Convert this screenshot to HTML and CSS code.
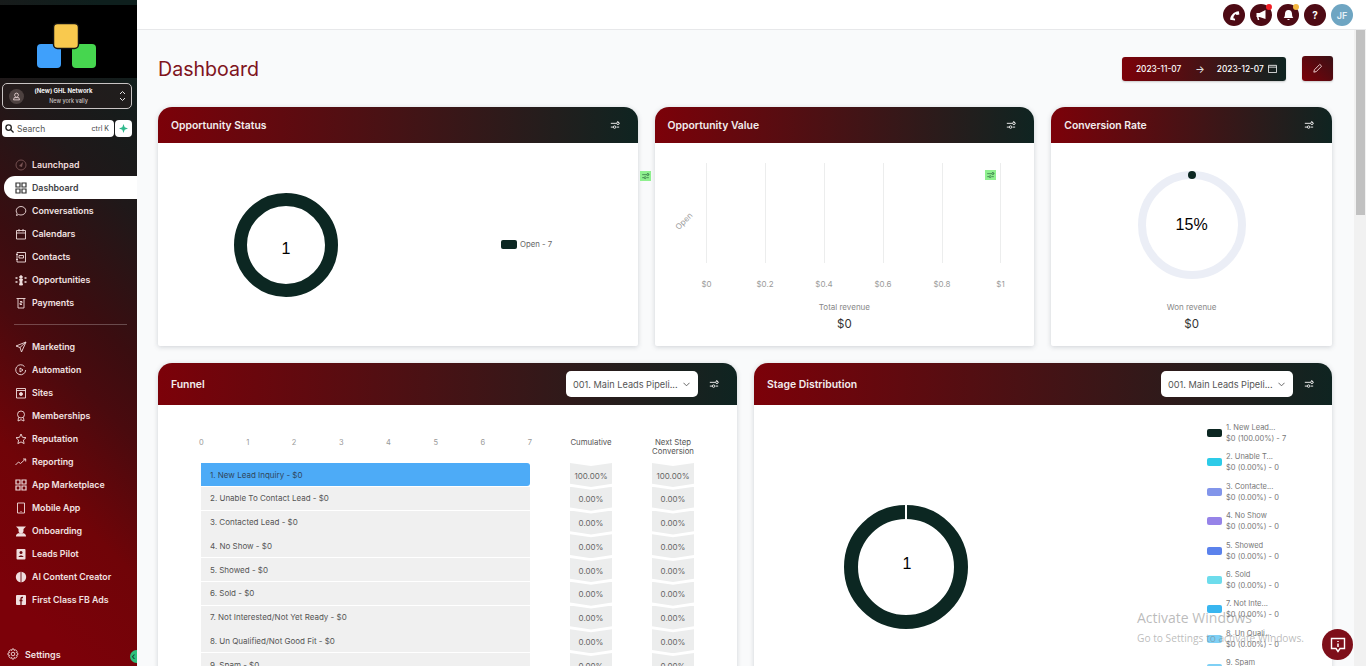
FILE: index.html
```html
<!DOCTYPE html>
<html lang="en">
<head>
<meta charset="utf-8">
<title>Dashboard</title>
<link rel="stylesheet" href="styles.css">
</head>
<body>
<svg class="defs" width="0" height="0" aria-hidden="true">
  <symbol id="sliders" viewBox="0 0 12 12"><path d="M1 4h7M1 8.500h3M8 8.500h3M9 1.500l2 2.500M4 8.500a1.500 1.500 0 1 0 3 0a1.500 1.500 0 1 0-3 0M8 4a1.500 1.500 0 1 0 3 0a1.500 1.500 0 1 0-3 0" fill="none" stroke="currentColor" stroke-width="1.200"/></symbol>
  <symbol id="grid" viewBox="0 0 12 12"><path d="M1 1h4v4H1zM7 1h4v4H7zM1 7h4v4H1zM7 7h4v4H7z" fill="none" stroke="currentColor" stroke-width="1.200"/></symbol>
</svg>
<div class="app">
  <aside class="sidebar">
    <div class="logo">
      <svg width="137" height="73" viewBox="0 0 137 73">
        <rect x="37" y="39" width="24" height="24" rx="4" fill="#3fa0fb"/>
        <rect x="72" y="39" width="24" height="24" rx="4" fill="#46d64f"/>
        <rect x="53.500" y="18.500" width="25" height="25" rx="4" fill="#f9c94e" stroke="#111" stroke-width="1.500"/>
      </svg>
    </div>
    <div class="account">
      <span class="account-avatar"><svg width="9" height="9" viewBox="0 0 12 12"><path d="M6 1.500a2.500 2.500 0 0 1 2.500 2.500c0 1.500-1.500 3-2.500 3S3.500 5.500 3.500 4A2.500 2.500 0 0 1 6 1.500zM2 10.500h8l-1-3H3z" fill="none" stroke="#f0dcdc" stroke-width="1.100"/></svg></span>
      <span class="account-text"><b>(New) GHL Network</b><small>New york vally</small></span>
      <svg class="account-caret" width="7" height="14" viewBox="0 0 7 14"><path d="M1 5l2.500-2.500L6 5M1 9l2.500 2.500L6 9" fill="none" stroke="#e4e4e4" stroke-width="1"/></svg>
    </div>
    <div class="search-row">
      <div class="search">
        <svg width="9" height="9" viewBox="0 0 10 10"><path d="M6.500 6.500L9.500 9.500M7 4a3 3 0 1 1-6 0a3 3 0 1 1 6 0z" fill="none" stroke="#222" stroke-width="1.500"/></svg>
        <span class="search-label">Search</span><span class="search-key">ctrl K</span>
      </div>
      <div class="spark"><svg width="9" height="9" viewBox="0 0 10 10"><path d="M5 0l1.300 3.700L10 5 6.300 6.300 5 10 3.700 6.300 0 5l3.700-1.300z" fill="#2fb98c"/></svg></div>
    </div>
    <nav class="nav">
      <a class="nav-item muted"><svg viewBox="0 0 12 12"><circle cx="6" cy="6" r="5" fill="none" stroke="#7a5555"/><path d="M4 7l4-4-1 5z" fill="#7a5555" stroke="none"/></svg>Launchpad</a>
      <a class="nav-item active"><svg viewBox="0 0 12 12"><use href="#grid"/></svg>Dashboard</a>
      <a class="nav-item"><svg viewBox="0 0 12 12"><path d="M6 1.500c2.800 0 4.800 2 4.800 4.300S8.800 10 6 10c-.8 0-1.600-.2-2.300-.5L1.500 10.500l.6-2.300C1.500 7.500 1.200 6.700 1.200 5.800 1.200 3.500 3.200 1.500 6 1.500z"/></svg>Conversations</a>
      <a class="nav-item"><svg viewBox="0 0 12 12"><path d="M1.500 2.500h9v8.500h-9zM1.500 5h9M4 1v2.500M8 1v2.500"/></svg>Calendars</a>
      <a class="nav-item"><svg viewBox="0 0 12 12"><path d="M2 1.500h8.500v9.500H2zM4 4.500h4.500v2.500H4zM1 3.500h2M1 8.500h2"/></svg>Contacts</a>
      <a class="nav-item"><svg viewBox="0 0 12 12"><circle cx="6" cy="3" r="1.300" fill="#f0dede"/><path d="M4.500 5h3l-.7 3 .7 3h-3l.7-3z" fill="#f0dede"/><path d="M.5 4h2M.5 8h2M9.500 4h2M9.500 8h2" stroke-width="1.500"/></svg>Opportunities</a>
      <a class="nav-item"><svg viewBox="0 0 12 12"><path d="M1.500 1.500h9M3 1.500v9.500h6V1.500M5 4.500h2v1.500H5v1.500h2"/></svg>Payments</a>
      <div class="nav-divider"></div>
      <a class="nav-item"><svg viewBox="0 0 12 12"><path d="M11 1L1 5l4 1.500L6.500 11zM11 1L5 6.500"/></svg>Marketing</a>
      <a class="nav-item"><svg viewBox="0 0 12 12"><path d="M9.500 2.500a5 5 0 1 0 1.200 3.500M5 4l3 2-3 2z"/></svg>Automation</a>
      <a class="nav-item"><svg viewBox="0 0 12 12"><path d="M1.500 1.500h9v9.500h-9zM1.500 3.500h9"/><circle cx="6" cy="7" r="1.500" fill="#f0dede"/></svg>Sites</a>
      <a class="nav-item"><svg viewBox="0 0 12 12"><circle cx="6" cy="4.500" r="3.500"/><path d="M3.500 7.500L3 11l3-1.300L9 11l-.5-3.500"/></svg>Memberships</a>
      <a class="nav-item"><svg viewBox="0 0 12 12"><path d="M6 1l1.500 3.300 3.500.4-2.600 2.400.7 3.500L6 8.900l-3.100 1.700.7-3.500L1 4.700l3.500-.4z"/></svg>Reputation</a>
      <a class="nav-item"><svg viewBox="0 0 12 12"><path d="M.5 9l3-3 2 1.500 5-4.500M8 3h2.700v2.500"/></svg>Reporting</a>
      <a class="nav-item"><svg viewBox="0 0 12 12"><use href="#grid"/></svg>App Marketplace</a>
      <a class="nav-item"><svg viewBox="0 0 12 12"><path d="M2.500 1h7v10h-7zM5.500 9.500h1"/></svg>Mobile App</a>
      <a class="nav-item"><svg viewBox="0 0 12 12"><path d="M1 1.500h10L8.500 4v1.800a2.500 2.500 0 0 1-5 0V4zM1 11.500c0-2.800 2-3.500 5-3.500s5 .7 5 3.500z" fill="#f0dede" stroke="none"/></svg>Onboarding</a>
      <a class="nav-item"><svg viewBox="0 0 12 12"><rect x="1.500" y="1" width="9" height="10.500" rx="1" fill="#f0dede" stroke="none"/><circle cx="6" cy="4.500" r="1.500" fill="#6a0a10" stroke="none"/><path d="M3.500 9c.3-2 4.700-2 5 0z" fill="#6a0a10" stroke="none"/></svg>Leads Pilot</a>
      <a class="nav-item"><svg viewBox="0 0 12 12"><circle cx="6" cy="6" r="5.200" fill="#f0dede" stroke="none"/><path d="M6 1v10" stroke="#6a0a10"/></svg>AI Content Creator</a>
      <a class="nav-item"><svg viewBox="0 0 12 12"><rect x="1" y="1" width="10" height="10" rx="1" fill="#f0dede" stroke="none"/><path d="M8 3.500H7c-.6 0-1 .4-1 1V11M4.500 6.500h3" stroke="#6a0a10" stroke-width="1.300"/></svg>First Class FB Ads</a>
    </nav>
    <a class="settings"><svg viewBox="0 0 12 12"><circle cx="6" cy="6" r="1.800"/><path d="M5 1h2l.3 1.500 1.300-.7 1.500 1.500-.8 1.200 1.500.5v2l-1.500.4.800 1.300-1.500 1.500-1.300-.8L7 11H5l-.3-1.600-1.300.8-1.500-1.500.8-1.300L1 7V5l1.700-.5-.8-1.200 1.500-1.500 1.300.7z"/></svg>Settings</a>
    <span class="collapse">‹</span>
  </aside>

  <div class="main">
    <header class="topbar">
      <span class="round"><svg width="13" height="13" viewBox="0 0 12 12"><path d="M2 10c0-4 3-7.500 8-8l.5 3-2.500.5-1-1C5.500 5.500 5 7 5 8.500l1.500.5v1.500z" fill="#fff"/></svg></span>
      <span class="round dot-red"><svg width="13" height="12" viewBox="0 0 12 12"><path d="M1 4h3l6-3v9L4 8H3l.8 3H2.300L1.500 8H1z" fill="#fff"/></svg></span>
      <span class="round dot-yellow"><svg width="13" height="13" viewBox="0 0 12 12"><path d="M6 1c2.300 0 3.300 1.800 3.300 4 0 1.800.7 2.500 1.200 3.300H1.500C2 7.500 2.700 6.800 2.700 5 2.700 2.800 3.700 1 6 1zM4.800 9.300h2.400C7 10.500 5 10.500 4.800 9.300z" fill="#fff"/></svg></span>
      <span class="round help">?</span>
      <span class="avatar">JF</span>
    </header>
    <div class="body-row">
      <main class="content">
        <div class="page-head">
          <h1>Dashboard</h1>
          <div class="date-range">
            <span>2023-11-07</span><span class="arrow">→</span><span>2023-12-07</span>
            <svg width="9" height="9" viewBox="0 0 10 10"><path d="M.5 1.500h9v8h-9zM.5 3.500h9" fill="none" stroke="#fff" stroke-width=".9"/></svg>
          </div>
          <button class="edit"><svg width="11" height="11" viewBox="0 0 12 12"><path d="M2 10l.6-2.600L8.500 1.500l2 2-5.900 5.900z" fill="none" stroke="#f3d6d6" stroke-width="1"/></svg></button>
        </div>

        <section class="row row-top">
          <article class="card">
            <header class="card-head"><h2>Opportunity Status</h2><svg class="tune"><use href="#sliders"/></svg></header>
            <div class="status-body">
              <div class="donut status-donut">1</div>
              <div class="status-legend"><i class="swatch swatch-dark"></i>Open - 7</div>
            </div>
          </article>
          <article class="card">
            <header class="card-head"><h2>Opportunity Value</h2><svg class="tune"><use href="#sliders"/></svg></header>
            <div class="value-body">
              <svg class="bar-chart" width="380" height="154" viewBox="0 0 380 154">
                <g stroke="#eceded" stroke-width="1"><path d="M52.500 20v100M111.500 20v100M170.500 20v100M229.500 20v100M288.500 20v100M346.500 20v100"/></g>
                <g class="tick"><text x="52.500" y="144">$0</text><text x="111" y="144">$0.2</text><text x="170" y="144">$0.4</text><text x="229" y="144">$0.6</text><text x="288" y="144">$0.8</text><text x="346.500" y="144">$1</text></g>
                <text class="tick" x="0" y="0" transform="translate(32 80) rotate(-45)">Open</text>
              </svg>
              <p class="stat-label">Total revenue</p>
              <p class="stat-value">$0</p>
            </div>
          </article>
          <article class="card">
            <header class="card-head"><h2>Conversion Rate</h2><svg class="tune"><use href="#sliders"/></svg></header>
            <div class="value-body">
              <div class="gauge-wrap">
                <div class="gauge">15%<i class="gauge-dot"></i></div>
              </div>
              <p class="stat-label">Won revenue</p>
              <p class="stat-value">$0</p>
            </div>
          </article>
        </section>

        <section class="row row-bottom">
          <article class="card">
            <header class="card-head tall"><h2>Funnel</h2><div class="head-tools"><div class="select">001. Main Leads Pipeli...<svg width="7" height="5" viewBox="0 0 8 5"><path d="M.5.500L4 4l3.500-3.500" fill="none" stroke="#555"/></svg></div><svg class="tune"><use href="#sliders"/></svg></div></header>
            <div class="funnel">
              <div class="funnel-head">
                <div class="axis"><span>0</span><span>1</span><span>2</span><span>3</span><span>4</span><span>5</span><span>6</span><span>7</span></div>
                <div class="col-title">Cumulative</div>
                <div class="col-title">Next Step Conversion</div>
              </div>
              <div class="funnel-row"><div class="bar first">1. New Lead Inquiry - $0</div><div class="pct">100.00%</div><div class="pct">100.00%</div></div>
              <div class="funnel-row"><div class="bar">2. Unable To Contact Lead - $0</div><div class="pct">0.00%</div><div class="pct">0.00%</div></div>
              <div class="funnel-row"><div class="bar">3. Contacted Lead - $0</div><div class="pct">0.00%</div><div class="pct">0.00%</div></div>
              <div class="funnel-row"><div class="bar">4. No Show - $0</div><div class="pct">0.00%</div><div class="pct">0.00%</div></div>
              <div class="funnel-row"><div class="bar">5. Showed - $0</div><div class="pct">0.00%</div><div class="pct">0.00%</div></div>
              <div class="funnel-row"><div class="bar">6. Sold - $0</div><div class="pct">0.00%</div><div class="pct">0.00%</div></div>
              <div class="funnel-row"><div class="bar">7. Not Interested/Not Yet Ready - $0</div><div class="pct">0.00%</div><div class="pct">0.00%</div></div>
              <div class="funnel-row"><div class="bar">8. Un Qualified/Not Good Fit - $0</div><div class="pct">0.00%</div><div class="pct">0.00%</div></div>
              <div class="funnel-row"><div class="bar">9. Spam - $0</div><div class="pct">0.00%</div><div class="pct">0.00%</div></div>
            </div>
          </article>
          <article class="card">
            <header class="card-head tall"><h2>Stage Distribution</h2><div class="head-tools"><div class="select">001. Main Leads Pipeli...<svg width="7" height="5" viewBox="0 0 8 5"><path d="M.5.500L4 4l3.500-3.500" fill="none" stroke="#555"/></svg></div><svg class="tune"><use href="#sliders"/></svg></div></header>
            <div class="stage">
              <div class="stage-chart"><div class="donut stage-donut">1</div></div>
              <ul class="stage-legend">
                <li><i class="swatch swatch-dark"></i><span>1. New Lead...<br>$0 (100.00%) - 7</span></li>
                <li><i class="swatch s2"></i><span>2. Unable T...<br>$0 (0.00%) - 0</span></li>
                <li><i class="swatch s3"></i><span>3. Contacte...<br>$0 (0.00%) - 0</span></li>
                <li><i class="swatch s4"></i><span>4. No Show<br>$0 (0.00%) - 0</span></li>
                <li><i class="swatch s5"></i><span>5. Showed<br>$0 (0.00%) - 0</span></li>
                <li><i class="swatch s6"></i><span>6. Sold<br>$0 (0.00%) - 0</span></li>
                <li><i class="swatch s7"></i><span>7. Not Inte...<br>$0 (0.00%) - 0</span></li>
                <li><i class="swatch s8"></i><span>8. Un Quali...<br>$0 (0.00%) - 0</span></li>
                <li><i class="swatch s8"></i><span>9. Spam<br>$0 (0.00%) - 0</span></li>
              </ul>
            </div>
          </article>
        </section>
      </main>
      <div class="scrollbar"><div class="thumb"></div></div>
    </div>
  </div>
</div>
<span class="float-tune tune-a"><svg width="9" height="8"><use href="#sliders"/></svg></span>
<span class="float-tune tune-b"><svg width="9" height="8"><use href="#sliders"/></svg></span>
<div class="activate"><p>Activate Windows</p><small>Go to Settings to activate Windows.</small></div>
<button class="chat"><svg width="18" height="18" viewBox="0 0 18 18"><path d="M2.500 2.500h13v10H11l-2 3-2-3H2.500z" fill="none" stroke="#fff" stroke-width="1.400"/><path d="M9 5v1M9 7.500v3.500" stroke="#fff" stroke-width="1.500"/></svg></button>
</body>
</html>
```

FILE: styles.css
```css
* { box-sizing: border-box; }
html, body { margin: 0; height: 666px; overflow: hidden; }
body { font-family: Inter, "Liberation Sans", sans-serif; background: #f9fafb; color: #444; position: relative; }
.defs { position: absolute; }
p, h1, h2, ul { margin: 0; padding: 0; }
ul { list-style: none; }

.app { display: flex; width: 1366px; height: 666px; }

/* Sidebar */
.sidebar { width: 137px; flex: none; height: 666px; display: flex; flex-direction: column; position: relative; padding-top: 5px;
  background: linear-gradient(225deg, #0e1f1d 5%, #1f1819 27%, #3a0d10 45%, #4a0a0e 55%, #700408 72%, #7c0109 90%); color: #f0dede; }
.logo { height: 73px; background: #000; flex: none; }
.logo svg { display: block; }
.account { margin: 5px 5px 0 2px; height: 26px; flex: none; border: 1px solid #c9c4c4; border-radius: 5px; display: flex; align-items: center; padding: 0 5px 0 6px; background: rgba(40, 30, 30, .6); }
.account-avatar { width: 15px; height: 15px; border-radius: 50%; background: #4d4140; display: flex; align-items: center; justify-content: center; flex: none; }
.account-text { flex: 1; display: flex; flex-direction: column; align-items: center; line-height: 10px; padding-right: 16px; }
.account-text b { font-size: 6px; font-weight: 700; color: #f2f2f2; }
.account-text small { font-size: 5.500px; color: #c9c2c2; font-weight: 500; padding-left: 10px; }
.account-caret { flex: none; }
.search-row { display: flex; gap: 1px; margin: 11px 5px 0 2px; flex: none; height: 17px; }
.search { flex: 1; background: #fff; border-radius: 4px; display: flex; align-items: center; padding: 0 5px 0 3px; gap: 3px; font-size: 8.500px; color: #555; }
.search-label { flex: 1; }
.search-key { font-size: 7px; color: #444; }
.spark { width: 17px; background: #fff; border-radius: 4px; display: flex; align-items: center; justify-content: center; }
.nav { display: flex; flex-direction: column; margin-top: 16px; }
.nav-item { height: 23px; flex: none; display: flex; align-items: center; gap: 5px; padding-left: 15px; font-size: 8.800px; font-weight: 600; color: #f2e2e2; white-space: nowrap; }
.nav-item svg, .settings svg { width: 12px; height: 12px; flex: none; fill: none; stroke: #f0dede; stroke-width: .9; }
.nav-item.muted { color: #efdcdc; }
.nav-item.active { margin-left: 4px; padding-left: 11px; background: #fff; border-radius: 11px 0 0 11px; color: #3f3f46; }
.nav-item.active svg { stroke: #333; color: #333; }
.nav-item svg use { color: #f0dede; }
.nav-item.active svg use { color: #333; }
.nav-divider { height: 1px; margin: 10px 10px 10px 14px; background: rgba(255, 255, 255, .25); flex: none; }
.settings { margin-top: auto; margin-bottom: 5px; height: 14px; display: flex; align-items: center; gap: 6px; padding-left: 7px; font-size: 9px; font-weight: 600; color: #f2e2e2; }
.collapse { position: absolute; right: 0; top: 650px; width: 7px; height: 13px; border-radius: 7px 0 0 7px; background: #2fc07d; color: #0d2b26; font-size: 10px; line-height: 12px; text-align: center; }

/* Main */
.main { flex: 1; min-width: 0; display: flex; flex-direction: column; }
.topbar { height: 30px; flex: none; background: #fff; border-bottom: 1px solid #e7e8ea; display: flex; justify-content: flex-end; align-items: center; gap: 5px; padding: 1px 13px 0 0; }
.round { width: 22px; height: 22px; border-radius: 50%; background: #4d0a14; display: flex; align-items: center; justify-content: center; position: relative; flex: none; }
.help { color: #fff; font-size: 10px; font-weight: 700; }
.dot-red::after, .dot-yellow::after { content: ""; position: absolute; right: 0; top: 0; width: 6px; height: 6px; border-radius: 50%; }
.dot-red::after { background: #f01c24; }
.dot-yellow::after { background: #f4b740; }
.avatar { width: 22px; height: 22px; border-radius: 50%; background: #6ea5c2; color: #e6f1f7; font-size: 9px; font-weight: 600; display: flex; align-items: center; justify-content: center; flex: none; }

.body-row { flex: 1; min-height: 0; display: flex; }
.content { flex: 1; min-width: 0; overflow: hidden; padding: 0 22px 0 21px; }
.scrollbar { width: 12px; flex: none; background: #f1f1f1; }
.thumb { height: 185px; margin: 0 1px 0 2px; background: #c1c1c1; }

.page-head { height: 77px; display: flex; align-items: center; }
.page-head h1 { flex: 1; font-size: 19.600px; font-weight: 400; color: #7f141d; }
.date-range { width: 164px; height: 24px; margin-right: 16px; border-radius: 3px; background: linear-gradient(90deg, #7c0109, #0f2421); color: #fff; font-size: 8.300px; font-weight: 500; display: flex; align-items: center; gap: 12px; padding-left: 14px; box-shadow: 0 1px 2px rgba(0, 0, 0, .2); }
.date-range .arrow { font-size: 10px; color: #ddd; margin-left: 2px; }
.date-range svg { margin-left: -8px; }
.edit { width: 31px; height: 25px; margin-right: -1px; border: 0; padding: 0; border-radius: 3px; background: linear-gradient(45deg, #7c0109, #3a1015); display: flex; align-items: center; justify-content: center; box-shadow: 0 1px 2px rgba(0, 0, 0, .2); }

.row { display: grid; gap: 17px; }
.row-top { grid-template-columns: 480fr 380fr 281fr; height: 239px; }
.row-bottom { grid-template-columns: 579fr 578fr; margin-top: 17px; }
.card { background: #fff; border-radius: 14px 14px 2px 2px; box-shadow: 0 1px 5px rgba(60, 70, 80, .22); display: flex; flex-direction: column; min-width: 0; }
.card-head { height: 36px; flex: none; border-radius: 14px 14px 0 0; background: linear-gradient(90deg, #7c0109, #0f2421); display: flex; align-items: center; justify-content: space-between; padding: 0 18px 0 13px; color: #fff; }
.card-head.tall { height: 42px; padding: 0 18px 0 13px; }
.card-head h2 { font-size: 10.400px; font-weight: 600; color: #f2eded; }
.tune { width: 10px; height: 10px; color: #e5e5e5; flex: none; }
.head-tools { display: flex; align-items: center; gap: 11px; }
.select { width: 132px; height: 26px; background: #fff; border-radius: 5px; display: flex; align-items: center; justify-content: space-between; padding: 0 8px 0 7px; color: #555; font-size: 9.200px; }

.donut { border-radius: 50%; display: flex; align-items: center; justify-content: center; font-family: "Liberation Sans", sans-serif; color: #000; flex: none; }
.status-body { flex: 1; display: flex; align-items: center; padding-left: 76px; }
.status-donut { width: 104px; height: 104px; border: 13px solid #0c2722; font-size: 16px; padding-top: 8px; }
.status-legend { display: flex; align-items: center; gap: 3px; margin-left: 163px; margin-top: -1px; font-size: 7.800px; color: #666; }
.swatch { width: 16px; height: 9px; border-radius: 2px; flex: none; }
.swatch-dark { background: #0c2722; }
.s2 { background: #2dcbe8; } .s3 { background: #8295ea; } .s4 { background: #9683e8; }
.s5 { background: #5b82ec; } .s6 { background: #6ddcec; } .s7 { background: #39b6f0; } .s8 { background: #7fd0f5; }

.value-body { flex: 1; display: flex; flex-direction: column; align-items: center; }
.bar-chart { display: block; flex: none; height: 154px; }
.tick, .tick text { font-family: Inter, "Liberation Sans", sans-serif; font-size: 8px; fill: #9a9a9a; text-anchor: middle; }
.stat-label { margin-top: 5px; font-size: 8px; color: #888; line-height: 10px; }
.stat-value { margin-top: 5px; font-size: 11.500px; color: #333; line-height: 14px; }
.gauge-wrap { height: 154px; flex: none; display: flex; justify-content: center; padding-top: 28px; }
.gauge { width: 108px; height: 108px; border-radius: 50%; border: 8px solid #ebeef6; display: flex; align-items: center; justify-content: center; font-family: "Liberation Sans", sans-serif; font-size: 16px; color: #000; position: relative; }
.gauge-dot { position: absolute; left: 42px; top: -8px; width: 8px; height: 8px; border-radius: 50%; background: #0c2722; }

.funnel { padding: 31px 0 0 43px; }
.funnel-head { display: flex; height: 27px; }
.axis { width: 333px; margin-left: -2px; display: flex; justify-content: space-between; font-size: 7.500px; color: #999; padding-top: 2px; }
.col-title { width: 42px; margin-left: 38px; text-align: center; font-size: 7.800px; line-height: 8.500px; color: #555; padding-top: 2px; }
.col-title + .col-title { margin-left: 40px; }
.funnel-row { display: flex; height: 23.750px; align-items: stretch; }
.bar { width: 329px; height: 23px; background: #f0f0f0; font-size: 8px; color: #555; display: flex; align-items: center; padding-left: 9px; }
.bar.first { background: #4dabf7; color: #30465c; border-radius: 0 3px 3px 0; }
.pct { width: 42px; margin-left: 40px; height: 24px; padding-top: 1px; background: #eceded; font-size: 8px; color: #666; display: flex; align-items: center; justify-content: center; clip-path: polygon(0 0, 50% 3px, 100% 0, 100% 86%, 50% 100%, 0 86%); }

.stage { display: flex; flex: 1; position: relative; }
.stage-chart { width: 453px; flex: none; padding: 100px 0 0 90px; }
.stage-donut { width: 124px; height: 124px; border: 14px solid #0c2722; font-size: 16px; position: relative; padding: 0 0 6px 2px; }
.stage-donut::before { content: ""; position: absolute; left: 47px; top: -14px; width: 2px; height: 14px; background: #fff; }
.stage-legend { padding-top: 17px; display: flex; flex-direction: column; gap: 7.400px; }
.stage-legend li { display: flex; align-items: center; gap: 4px; font-size: 7.500px; line-height: 11px; color: #777; white-space: nowrap; }
.stage-legend .swatch { height: 8px; width: 15px; }

/* Overlays */
.float-tune { position: absolute; width: 11px; height: 10px; background: #8ff08f; color: #3a7a4a; display: flex; align-items: center; justify-content: center; }
.tune-a { left: 640px; top: 171px; }
.tune-b { left: 985px; top: 170px; }
.activate { position: absolute; left: 1137px; top: 610px; color: rgba(120, 120, 120, .5); pointer-events: none; }
.activate p { font-size: 14px; line-height: 16px; font-family: "Open Sans", sans-serif; }
.activate small { font-size: 10.200px; font-family: "Open Sans", sans-serif; }
.chat { position: absolute; left: 1322px; top: 629px; width: 31px; height: 31px; border-radius: 50%; border: 0; padding: 0; background: #7e0f1a; display: flex; align-items: center; justify-content: center; }
```
